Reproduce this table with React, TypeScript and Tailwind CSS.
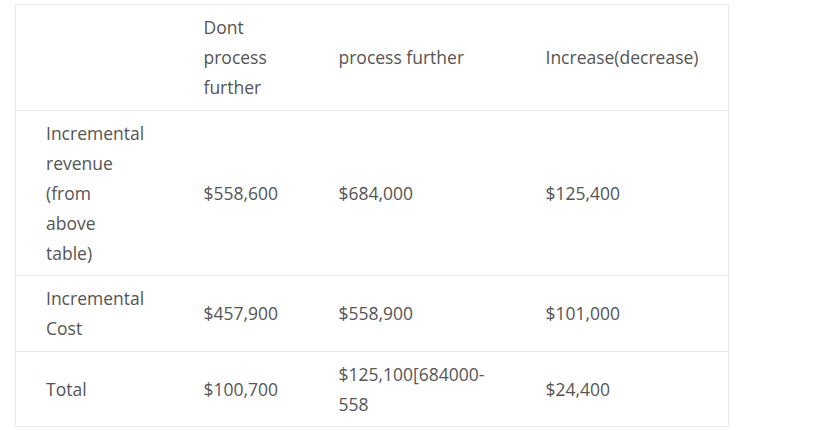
import React from 'react';

const rows: string[][] = [
  ['', 'Dont process further', 'process further', 'Increase(decrease)'],
  ['Incremental revenue (from above table)', '$558,600', '$684,000', '$125,400'],
  ['Incremental Cost', '$457,900', '$558,900', '$101,000'],
  ['Total', '$100,700', '$125,100[684000-558', '$24,400'],
];

const widths = ['w-[158px]', 'w-[135px]', 'w-[207px]', 'w-[213px]'];

export default function App() {
  return (
    <div className="w-[818px] h-[430px] bg-white pl-[15px] pt-[4px] font-['Open_Sans',sans-serif] text-[17.5px] leading-[30px] text-[#555]">
      <table className="table-fixed border-collapse border border-[#eaeaea] w-[713px]">
        <colgroup>
          {widths.map((w, i) => (
            <col key={i} className={w} />
          ))}
        </colgroup>
        <tbody>
          {rows.map((row, r) => (
            <tr key={r} className="border-b border-[#eaeaea]">
              {row.map((cell, c) => (
                <td key={c} className="px-[30px] pt-[7px] pb-[7.5px] align-middle">
                  {cell}
                </td>
              ))}
            </tr>
          ))}
        </tbody>
      </table>
    </div>
  );
}
